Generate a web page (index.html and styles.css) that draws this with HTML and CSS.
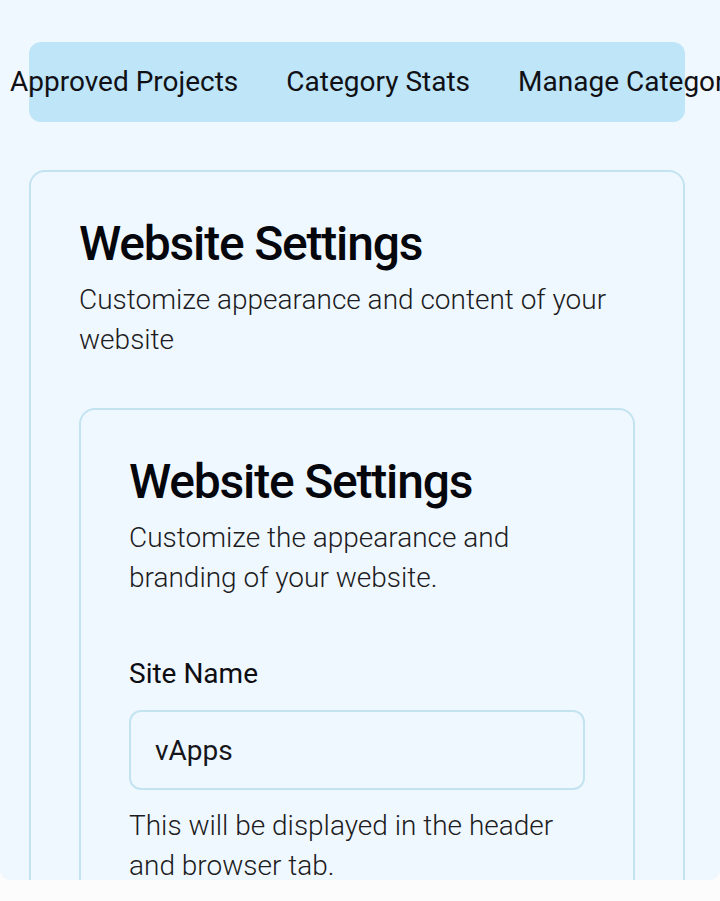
FILE: index.html
```html
<!DOCTYPE html>
<html lang="en">
<head>
<meta charset="utf-8">
<title>Website Settings</title>
<link rel="stylesheet" href="styles.css">
</head>
<body>
<div class="screen">
  <div class="page">
    <div class="tabs-bar">
      <div class="tabs-list">
        <button class="tab">Approved Projects</button>
        <button class="tab">Category Stats</button>
        <button class="tab">Manage Categories</button>
      </div>
    </div>

    <section class="card outer">
      <header class="card-header">
        <h1 class="card-title">Website Settings</h1>
        <p class="card-desc">Customize appearance and content of your website</p>
      </header>
      <div class="card-content">
        <section class="card inner">
          <header class="card-header">
            <h2 class="card-title">Website Settings</h2>
            <p class="card-desc">Customize the appearance and branding of your website.</p>
          </header>
          <div class="card-content">
            <div class="form-item">
              <label class="label" for="siteName">Site Name</label>
              <input class="input" id="siteName" type="text" value="vApps">
              <p class="help">This will be displayed in the header and browser tab.</p>
            </div>
          </div>
        </section>
      </div>
    </section>
  </div>
</div>
</body>
</html>
```

FILE: styles.css
```css
* { box-sizing: border-box; }

html, body {
  margin: 0;
  padding: 0;
}

body {
  background: #fcfcfc;
  font-family: Roboto, "Noto Sans", "Liberation Sans", sans-serif;
  color: #0a0a0f;
  overflow: hidden;
}

.screen {
  height: 880px;
  overflow: hidden;
  background: #f0f8ff;
  border-radius: 0 0 10px 10px;
}

.page {
  padding: 42px 35px 0 29px;
}

.tabs-bar {
  height: 80px;
  background: #bee5f8;
  border-radius: 12px;
  padding: 8px;
  display: flex;
  align-items: center;
}

.tabs-list {
  display: flex;
  align-items: center;
  margin-left: -51px;
  white-space: nowrap;
}

.tab {
  background: none;
  border: 0;
  padding: 11px 24px 13px;
  font-family: inherit;
  font-size: 28px;
  font-weight: 400;
  color: #101015;
  white-space: nowrap;
}

.card {
  border: 2px solid #c3e3f1;
  border-radius: 16px;
  background: #f0f8ff;
}

.outer {
  margin-top: 48px;
}

.card-header {
  padding: 48px;
  display: flex;
  flex-direction: column;
  gap: 12px;
}

.card-title {
  margin: 0;
  font-size: 48px;
  line-height: 48px;
  font-weight: 500;
  letter-spacing: -1.2px;
  color: #05070d;
}

.card-desc {
  margin: 0;
  font-size: 28px;
  line-height: 40px;
  font-weight: 300;
  color: #1c1c22;
}

.card-content {
  padding: 0 48px 48px;
}

.form-item {
  display: flex;
  flex-direction: column;
  gap: 16px;
  padding-top: 8px;
}

.label {
  font-size: 28px;
  line-height: 40px;
  font-weight: 400;
  color: #0d0d12;
}

.input {
  height: 80px;
  width: 100%;
  border: 2px solid #c3e3f1;
  border-radius: 12px;
  background: #f0f8ff;
  padding: 0 24px;
  font-family: inherit;
  font-size: 28px;
  color: #16161b;
  outline: none;
}

.help {
  margin: 0;
  font-size: 28px;
  line-height: 40px;
  font-weight: 300;
  color: #1c1c22;
}
```
